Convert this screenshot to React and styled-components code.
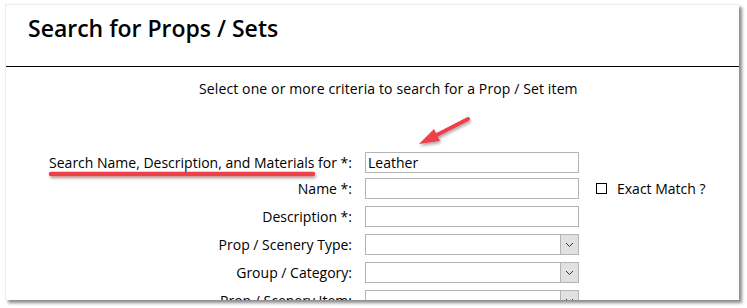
import React from "react";
import styled, { createGlobalStyle } from "styled-components";

const GlobalStyle = createGlobalStyle`
  body {
    margin: 0;
    background: #ffffff;
    font-family: "Open Sans", "Noto Sans", sans-serif;
    color: #000;
  }
`;

const Page = styled.div`
  padding: 4px 8px 9px 5px;
`;

const Card = styled.section`
  position: relative;
  height: 295px;
  background: #fff;
  border-top: 1px solid #ececec;
  border-left: 1px solid #ececec;
  box-shadow: 3px 3px 3px rgba(0, 0, 0, 0.45);
  overflow: hidden;
`;

const Header = styled.header`
  height: 62px;
  border-bottom: 1px solid #000;
  padding: 7px 0 0 22px;
  box-sizing: border-box;
`;

const Title = styled.h1`
  margin: 0;
  font-size: 23px;
  font-weight: 600;
  letter-spacing: 0;
`;

const Intro = styled.p`
  margin: 0;
  padding: 12px 0 0 193px;
  font-size: 14px;
  letter-spacing: 0.12px;
  line-height: 20px;
`;

const Form = styled.form`
  display: grid;
  grid-template-columns: 346px 214px auto;
  column-gap: 13px;
  align-items: center;
  margin-top: ${(p) => p.$top}px;
`;

const Label = styled.label`
  text-align: right;
  font-size: 14px;
  line-height: 21px;
  white-space: nowrap;
  margin-bottom: ${(p) => p.$gap}px;
`;

const Field = styled.div`
  position: relative;
  height: 21px;
  border: 1px solid #b4b4b4;
  box-sizing: border-box;
  font-size: 14px;
  line-height: 19px;
  padding-left: 2px;
  margin-bottom: ${(p) => p.$gap}px;
`;

const DropButton = styled.span`
  position: absolute;
  top: 0;
  right: 0;
  width: 17px;
  height: 19px;
  background: #e1e1e1;
  border-left: 1px solid #b4b4b4;
  display: flex;
  align-items: center;
  justify-content: center;
`;

const Extra = styled.div`
  display: flex;
  align-items: center;
  gap: 10px;
  padding-left: 4px;
  font-size: 14px;
  margin-bottom: ${(p) => p.$gap}px;
`;

const Box = styled.span`
  width: 9px;
  height: 9px;
  border: 1px solid #000;
`;

const Overlay = styled.svg`
  position: absolute;
  left: 0;
  top: 0;
  pointer-events: none;
`;

const rows = [
  { label: "Search Name, Description, and Materials for *:", value: "Leather", gap: 5 },
  { label: "Name *:", extra: true },
  { label: "Description *:" },
  { label: "Prop / Scenery Type:", select: true },
  { label: "Group / Category:", select: true },
  { label: "Prop / Scenery Item:", select: true },
];

const Chevron = () => (
  <svg width="9" height="6" viewBox="0 0 9 6">
    <path d="M1 1 L4.5 4.5 L8 1" fill="none" stroke="#333" strokeWidth="1" />
  </svg>
);

export default function App() {
  return (
    <Page>
      <GlobalStyle />
      <Card>
        <Header>
          <Title>Search for Props / Sets</Title>
        </Header>
        <Intro>Select one or more criteria to search for a Prop / Set item</Intro>
        <Form $top={53}>
          {rows.map((r, i) => {
            const gap = r.gap ?? 7;
            return (
              <React.Fragment key={i}>
                <Label $gap={gap}>{r.label}</Label>
                <Field $gap={gap}>
                  {r.value}
                  {r.select && (
                    <DropButton>
                      <Chevron />
                    </DropButton>
                  )}
                </Field>
                <Extra $gap={gap}>
                  {r.extra && (
                    <>
                      <Box />
                      Exact Match ?
                    </>
                  )}
                </Extra>
              </React.Fragment>
            );
          })}
        </Form>
        <Overlay width="740" height="300">
          <defs>
            <filter id="sh" x="-10%" y="-50%" width="120%" height="300%">
              <feDropShadow dx="1" dy="2" stdDeviation="1.5" floodColor="#000" floodOpacity="0.35" />
            </filter>
          </defs>
          <g filter="url(#sh)" fill="#ee3f48" stroke="#ee3f48">
            <path d="M45 169 L307 169" strokeWidth="4.5" strokeLinecap="round" />
            <path d="M462 114 L423 134" strokeWidth="4" strokeLinecap="round" />
            <path d="M413 139 L428 124 L434 136 Z" stroke="none" />
          </g>
        </Overlay>
      </Card>
    </Page>
  );
}
